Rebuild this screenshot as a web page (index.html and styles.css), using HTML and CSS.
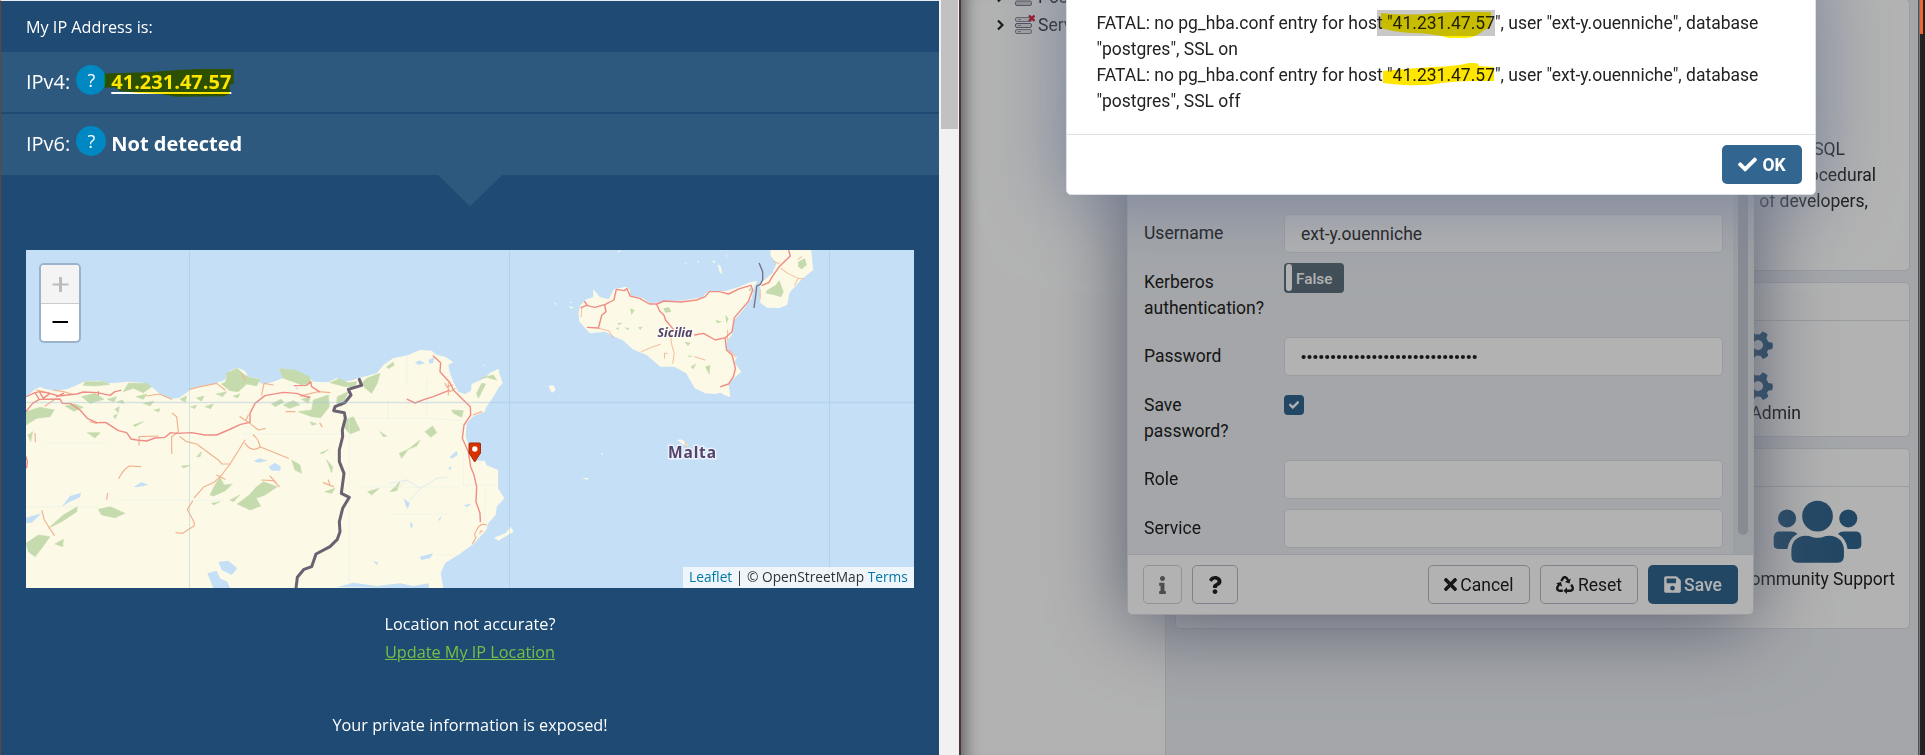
FILE: index.html
```html
<!DOCTYPE html>
<html lang="en">
<head>
<meta charset="utf-8">
<title>My IP Address</title>
<link rel="stylesheet" href="styles.css">
</head>
<body>
<main class="screen">
  <section class="ip-page">
    <header class="ip-title">My IP Address is:</header>
    <div class="ip-row ip-row-first">
      <span>IPv4:</span><span class="help">?</span>
      <a class="ip-value ip-link">41.231.47.57<svg class="marker marker-ip" viewBox="313 207 394 85" width="131" height="28"><path d="M313 221L440 217L525 211L600 207H705V252L693 254V283L676 290L530 291L485 283L420 280L360 274L345 263L313 264Z" fill="#ffe600"/></svg></a>
    </div>
    <div class="ip-row ip-row-last">
      <span>IPv6:</span><span class="help">?</span><strong class="ip-value">Not detected</strong>
    </div>
    <svg class="pointer" viewBox="0 0 64 32" width="64" height="32"><path d="M0 0H64L32 31.5Z" fill="#2d597f"/></svg>

    <div class="map">
      <svg class="map-art" viewBox="26 250 888 338" width="888" height="338">
        <rect x="26" y="250" width="888" height="338" fill="#c5dff6"/>
        <!-- North Africa -->
        <g transform="translate(0 240) scale(.33333)" stroke-linejoin="round" stroke-linecap="round">
          <path fill="#fcfae6" d="M78 470L105 448L120 441L135 447L165 452L200 448L225 438L255 424L300 422L325 430L350 428L385 425L430 428L460 445L480 462L510 476L535 475L555 462L575 445L600 438L640 432L675 420L680 405L690 392L712 383L735 393L745 410L775 415L780 430L795 432L820 425L850 414L845 400L835 386L870 390L900 400L925 410L940 425L985 427L1010 414L1030 424L1050 422L1075 415L1100 408L1130 400L1150 375L1180 355L1225 345L1260 330L1295 332L1310 345L1335 350L1360 366L1345 375L1350 400L1360 425L1375 455L1395 462L1413 452L1415 432L1454 415L1470 398L1496 386L1498 400L1508 430L1495 445L1480 470L1460 500L1454 515L1418 530L1400 550L1397 590L1410 625L1423 662L1454 662L1460 676L1494 690L1494 745L1513 775L1490 800L1487 825L1465 850L1459 870L1423 910L1382 940L1335 970L1322 1000L1330 1045H78Z"/>
          <g fill="#c5dbae" stroke="#c5dbae" stroke-width="2" stroke-dasharray="5 3">
            <path d="M678 425L680 400L712 385L730 402L748 412L780 418L770 438L740 432L715 455L690 452L664 432ZM838 386L885 390L928 410L934 430L905 435L880 425L850 415ZM1018 416L1045 428L1070 425L1065 440L1035 440L990 428ZM1100 415L1140 400L1132 430L1115 460L1096 445L1085 430ZM1012 470L1045 455L1025 500L1010 490ZM940 480L985 465L988 500L962 533L935 530L895 515L935 510ZM385 430L440 430L455 440L430 458L400 445L370 455ZM255 425L310 425L330 433L285 438L250 436ZM1160 380L1180 366L1182 376L1165 386Z"/>
            <path d="M245 470L285 460L312 478L270 490ZM78 515L120 502L163 510L150 530L110 535L78 555ZM262 578L300 578L285 594ZM630 765L645 735L660 712L672 735L697 732L675 753L640 768ZM712 792L748 765L768 742L790 725L832 740L795 765L768 775L782 798L750 810ZM295 808L330 800L375 820L345 833L305 825ZM145 865L190 825L232 800L230 815L185 845ZM78 910L115 885L150 890L125 925L105 950L85 935ZM165 912L190 898L188 920ZM1035 540L1060 530L1080 570L1050 582L1035 565ZM1275 575L1298 558L1310 578L1292 592ZM1198 640L1225 628L1205 655ZM1225 628L1260 600L1250 618ZM1103 755L1138 745L1115 765ZM1170 755L1200 725L1190 752ZM1355 510L1390 512L1385 532L1360 520ZM1430 460L1445 430L1457 432L1435 475ZM1440 415L1480 405L1490 420L1460 412ZM875 660L900 675L905 700L885 690ZM960 640L985 628L970 640ZM980 660L998 680L995 698ZM545 678L570 676L550 684ZM975 755L1005 745L995 760ZM1140 575L1160 588L1150 590ZM400 555L430 545L405 560ZM590 650L605 635L600 650ZM635 790L660 785L640 795ZM690 780L720 765L700 785Z"/>
            <path d="M195 498L225 492L250 502L222 514ZM322 478L350 470L342 486ZM350 486L368 480L372 490ZM345 508L358 500L355 518ZM408 470L440 462L430 478ZM430 490L462 484L450 498ZM540 478L560 468L556 486ZM590 474L612 468L604 484ZM615 500L640 492L632 506ZM650 462L680 455L668 470ZM815 492L842 478L852 486L826 500ZM850 495L880 482L900 494L868 505ZM905 478L930 470L925 490ZM700 468L720 462L712 474ZM462 510L480 506L476 516ZM84 585L98 575L92 605ZM930 545L950 552L936 556ZM340 528L352 522L346 536ZM572 500L590 496L584 506Z"/>
          </g>
          <g fill="#c5dff6">
            <path d="M185 800L210 768L243 758L240 772L210 785ZM78 833L125 820L95 848L78 850ZM402 740L425 726L445 735L410 742ZM806 680L825 668L843 680L840 692L815 692ZM760 662L780 655L803 662L775 668ZM655 965L685 962L712 985L695 1005L665 990ZM622 1000L650 992L660 1015L682 1025L690 1045H640ZM1350 650L1370 632L1373 645L1355 656ZM1245 367L1260 361L1275 370L1255 375ZM1285 360L1303 352L1300 368L1288 371ZM1392 795L1415 792L1400 802ZM1260 950L1300 940L1290 955L1263 960ZM1120 962L1135 968L1130 976ZM1210 775L1230 790L1222 808ZM1230 845L1240 855L1232 866ZM1315 840L1325 825L1320 842ZM1010 1042L1060 1028L1130 1038L1200 1030L1240 1038L1285 1030L1288 1045ZM1345 684L1354 678L1350 692ZM895 445L885 440L892 450Z"/>
          </g>
          <path fill="none" stroke="#c5dff6" stroke-width="2" opacity=".8" d="M1170 730L1220 720L1262 745L1310 715L1340 712M1262 745L1215 795M1220 720L1200 740"/>
          <path fill="none" stroke="#e3ece9" stroke-width="2" opacity=".75" d="M135 609H320M355 781H670M78 800H290M730 582H1020M1075 535H1280L1385 541M1048 525V1045M1075 741H1380M1220 345V430M1280 420V520M1163 480V535M1390 640V735H1495M1455 740V840M1310 945H1380M1170 815L1180 822H1340"/>
          <path fill="none" stroke="#f1b28f" stroke-width="3.5" d="M135 498L165 478M517 520L530 530L535 575L515 590V640M440 468L478 462L515 478M570 448L600 440L650 430L675 450M725 400L735 420M785 465L792 430L820 435M930 470L900 468L955 455L990 458M858 515L885 515M540 590L560 605L590 612L655 660L665 672L690 672L735 600M690 672L665 705L645 725L610 742L583 773M650 705L675 718M578 783L562 808L583 848L582 858L548 880L528 878M735 610Q755 638 780 622Q778 600 760 585M780 620L865 655M785 720L820 722L838 740M810 708L830 730M970 728L1000 740M985 720L990 735M357 715Q368 690 388 678L422 680M126 812L133 840L163 886M105 580L106 605M320 778L323 760M417 615V590L475 588M720 530L750 550L775 570L795 566M738 540L745 525M960 550L966 560M1335 430L1350 455L1365 445M1340 440L1358 435M1345 430V465M1460 855Q1440 848 1430 870Q1420 885 1428 893L1418 910M1440 880Q1440 870 1448 873M1420 525L1445 515M270 545L290 550M160 450L190 455L215 462M110 450L150 460"/>
          <path fill="none" stroke="#f08c86" stroke-width="4.2" d="M78 470L105 458L120 455L150 460L175 468L230 462L250 456L293 458L330 466L345 455L362 451M105 458L118 478L180 477L187 490L212 491L240 510L262 535L290 548L317 547L355 572L380 578L393 597L410 600L440 603L465 594L495 592L512 578L530 580L575 578L615 585L650 585L685 570L722 553L750 547L750 520L765 490L795 467L850 457L890 460L928 473M883 437L920 436L932 425L935 440L958 455M118 478L98 490L78 515M118 455L130 475L150 460M170 470L190 460M295 455V465M78 650L82 665L80 683M1300 348L1322 368L1320 395L1350 428L1360 450L1390 480L1411 500L1412 525L1392 555L1387 595L1405 635L1412 680L1422 705L1430 740L1428 785L1440 820L1441 845M1222 478L1245 489L1280 476L1300 470L1345 452"/>
          <path fill="none" stroke="#6c6073" stroke-width="9" d="M1078 418L1085 436L1045 448L1053 465L1035 488L1005 500L1001 512L1033 518L1036 535L1027 570L1028 590L1018 630L1018 665L1032 700L1030 715L1024 760L1048 772L1028 805L1018 845L1020 875L1012 898L990 920L948 942L935 980L912 988L892 1012L888 1045"/>
        </g>
        <!-- Sicily, Calabria and small islands -->
        <g transform="translate(440 240) scale(.34436 .33333)" stroke-linejoin="round" stroke-linecap="round">
          <g fill="#fcfae6">
            <path d="M408 195L425 178L445 172L445 148L465 172L490 178L505 148L540 140L552 150L552 165L590 175L610 190L630 188L650 183L700 182L760 172L780 153L830 153L865 142L905 125L922 124L912 140L905 175L880 210L855 240L848 285L835 300L830 328L850 340L862 350L856 368L875 395L858 410L838 432L843 472L825 465L815 458L800 462L770 460L740 445L715 400L680 380L640 380L600 345L560 328L530 300L510 292L480 275L435 280L405 245L402 220Z"/>
            <path d="M960 30H1078L1084 90L1050 118L1015 158L1008 195L985 204L950 203L930 188L930 130L965 100L978 70L960 48Z"/>
            <path d="M315 438L330 436L336 450L325 459ZM688 600L700 598L712 606L722 620L705 612ZM157 893L190 880L205 860L214 875L192 888L170 902ZM412 714L430 714L430 720ZM806 72L815 78L820 104L812 95ZM788 62L800 64L798 70ZM712 68H716V71H712ZM748 62H752V67H748ZM332 188L337 190L336 198ZM372 200L386 200L384 206ZM378 185H382V189H378ZM126 374H130V377H126ZM468 640H472V644H468ZM832 46H835V50H832ZM517 32H524V36H517Z"/>
          </g>
          <g fill="#c5dbae">
            <path d="M1040 65L1060 55L1065 75L1050 88L1040 80ZM950 150L975 135L985 120L998 155L990 172L970 165L945 160ZM552 205L565 210L556 225ZM648 205L665 202L672 215L655 218ZM510 265L520 262L518 270ZM535 262L550 265L545 270ZM575 262L588 260L582 270ZM515 250L530 248L520 256ZM710 305L728 308L720 318ZM720 347H732V350H720ZM728 380L745 370L735 388ZM770 380L785 375L782 405ZM828 225L838 235L832 252ZM800 240L820 245L805 250ZM895 150L905 140L903 155Z"/>
          </g>
          <path fill="none" stroke="#f1b28f" stroke-width="3" opacity=".8" d="M460 265L490 272L502 292M585 335L615 322L640 313M670 280L672 310L680 340L676 370M652 355V340H660M740 350L770 360M410 230L412 200M990 85L1010 100L1040 115L1056 117M1040 115L1030 135M968 65L985 70M1040 58L1050 50M930 150V175M835 270V300M840 330L858 350M712 606L718 625"/>
          <path fill="none" stroke="#f08c86" stroke-width="4.2" d="M410 203L425 196L450 202L480 193L505 180L512 148L535 152L543 146L552 168L580 175L608 192L630 192L650 183L700 186L745 180L770 170L782 155L812 155L838 162L870 146L903 136L908 150L895 185L855 233L848 275L828 293L800 300L765 280L740 285M420 185L428 196M428 262L460 264L470 225L482 215L478 195M630 195L638 213L650 225L655 240L678 268M828 293L832 330L848 345L858 385L852 410L838 432L815 440M1013 32L1017 48L985 80L965 110L955 128L935 136"/>
          <path fill="none" stroke="#6c6073" stroke-width="4" opacity=".85" d="M927 70L937 95V120L930 133L920 138L917 165L912 202"/>
        </g>
        <g stroke="#9fc0d9" opacity=".4"><path d="M189.5 250V588M509.5 250V588M829.5 250V588"/><path d="M26 402.500H914" stroke-width="1.500"/></g>
        <!-- Position pin -->
        <path d="M470 443Q469 443 469 444V453L474.700 462L480.500 453V444Q480.500 443 479.500 443Z" fill="#d63300" stroke="#a02c10" stroke-width="1"/><circle cx="474.800" cy="449" r="2.700" fill="#fff"/>
        <text class="label-region" x="657.500" y="336.500" textLength="35" lengthAdjust="spacingAndGlyphs">Sicilia</text>
        <text class="label-country" x="668" y="458" textLength="48">Malta</text>
      </svg>
      <div class="zoom-control"><span class="zoom-in"><svg width="17" height="17"><path d="M8.500 1V16" stroke="#bbb" stroke-width="3"/><path d="M.5 8.500H16.500" stroke="#bbb" stroke-width="2"/></svg></span><span class="zoom-out"><svg width="17" height="17"><path d="M.5 8H16" stroke="#000" stroke-width="2"/></svg></span></div>
      <div class="attribution"><a>Leaflet</a> | © OpenStreetMap <a>Terms</a></div>
    </div>
    <p class="accuracy">Location not accurate?<br><a>Update My IP Location</a></p>
    <p class="exposed">Your private information is exposed!</p>
  </section>
  <div class="scrollbar"><div class="scroll-thumb"></div></div>
  <div class="window-edge"></div>

  <section class="admin">
    <aside class="tree">
      <div class="tree-row"><svg width="7" height="12" viewBox="0 0 7 12"><path class="chevron" d="M1 1.500L5.500 6L1 10.500"/></svg><svg class="server" width="20" height="20" viewBox="0 0 20 20"><g fill="#d0d0d5" stroke="#77747f"><rect x=".5" y="2.500" width="16" height="4.500" rx="1.500"/><rect x=".5" y="8" width="16" height="4.500" rx="1.500"/><rect x=".5" y="14" width="16" height="4.500" rx="1.500"/></g></svg><span>Pos</span></div>
      <div class="tree-row"><svg width="7" height="12" viewBox="0 0 7 12"><path class="chevron" d="M1 1.500L5.500 6L1 10.500"/></svg><svg class="server" width="20" height="20" viewBox="0 0 20 20"><g fill="#e8e8ec" stroke="#8b8892"><rect x=".5" y="2.500" width="16" height="4" rx="1.500"/><rect x=".5" y="8.500" width="16" height="4" rx="1.500" stroke="#6c6385"/><rect x=".5" y="14.500" width="16" height="4" rx="1.500"/></g><path d="M3 4.500H6M3 10.500H6M3 16.500H6" stroke="#999"/><path d="M14 .5L19.500 6M19.500 .5L14 6" stroke="#d4122d" stroke-width="2.400"/></svg><span>Serv</span></div>
    </aside>
    <div class="dashboard">
      <article class="card card-about"><p class="line-a">SQL</p><p class="line-b">procedural</p><p class="line-c">of developers,</p></article>
      <article class="card card-links"><div class="card-head"></div>
        <div class="quick">
          <svg class="gear" viewBox="-15 -15 30 30" width="30" height="30"><use href="#gear"/></svg>
          <svg class="gear" viewBox="-15 -15 30 30" width="30" height="30"><use href="#gear"/></svg>
          <span class="quick-label">pgAdmin</span>
        </div>
      </article>
      <article class="card card-community"><div class="card-head"></div>
        <div class="community">
          <svg viewBox="1113 178 266 188" width="89" height="63" preserveAspectRatio="none" fill="#326690"><circle cx="1155" cy="233" r="27"/><circle cx="1246" cy="226" r="46"/><circle cx="1338" cy="233" r="27"/><path d="M1130 272H1168Q1178 272 1186 279Q1160 295 1156 324H1128Q1115 324 1115 311V294Q1115 272 1130 272ZM1362 272H1325Q1315 272 1307 279Q1332 295 1336 324H1364Q1377 324 1377 311V294Q1377 272 1362 272ZM1208 285Q1222 285 1232 289Q1246 293 1260 289Q1270 285 1284 285Q1325 290 1325 330V345Q1325 365 1306 365H1187Q1168 365 1168 345V330Q1168 290 1208 285Z"/></svg>
          <span>Community Support</span>
        </div>
      </article>
    </div>
    <div class="desktop-edge"><i></i></div>
  </section>

  <svg class="defs" width="0" height="0"><defs><g id="gear" fill="#326690"><path fill-rule="evenodd" d="M-3-14Q0-15 3-14L3.800-10Q6-9 7.500-7.700L11.300-9.200Q13.700-6.800 14.300-3.600L11.200-1V1.500L14.300 4Q13.700 7 11.300 9.500L7.500 8Q6 9.200 3.800 10L3 14Q0 15 -3 14L-3.800 10Q-6 9.200-7.500 8L-11.300 9.500Q-13.700 7-14.300 4L-11.200 1.500V-1L-14.300-3.600Q-13.700-6.800-11.300-9.200L-7.500-7.700Q-6-9-3.800-10ZM5 0A5 5 0 1 0-5 0A5 5 0 1 0 5 0Z" transform="rotate(30)"/></g></defs></svg>

  <!-- Connection dialog -->
  <section class="dialog">
    <div class="dialog-body">
      <div class="form">
        <div class="field"><label>Username</label><div class="input">ext-y.ouenniche</div></div>
        <div class="field field-tall"><label>Kerberos authentication?</label><div class="toggle"><i></i>False</div></div>
        <div class="field"><label>Password</label><div class="input"><svg width="178" height="6"><path d="M2.600 3H176" stroke="#222" stroke-width="4.200" stroke-linecap="round" stroke-dasharray="0 5.900"/></svg></div></div>
        <div class="field field-tall"><label>Save<br>password?</label><div class="checkbox"><svg viewBox="0 0 512 512" width="10" height="10"><path fill="#fff" stroke="#fff" stroke-width="30" d="M173.898 439.404l-166.400-166.400c-9.997-9.997-9.997-26.206 0-36.204l36.203-36.204c9.997-9.998 26.207-9.998 36.204 0L192 312.690 432.095 72.596c9.997-9.997 26.207-9.997 36.204 0l36.203 36.204c9.997 9.997 9.997 26.206 0 36.204l-294.400 294.401c-9.998 9.997-26.207 9.997-36.204-.001z"/></svg></div></div>
        <div class="field"><label>Role</label><div class="input"></div></div>
        <div class="field"><label>Service</label><div class="input"></div></div>
      </div>
      <div class="dialog-scroll"><i></i></div>
    </div>
    <footer class="dialog-foot">
      <span class="btn btn-info"><svg viewBox="0 0 192 512" width="7" height="18"><path fill="#222" d="M20 424.229h20V279.771H20c-11.046 0-20-8.954-20-20V212c0-11.046 8.954-20 20-20h112c11.046 0 20 8.954 20 20v212.229h20c11.046 0 20 8.954 20 20V492c0 11.046-8.954 20-20 20H20c-11.046 0-20-8.954-20-20v-47.771c0-11.046 8.954-20 20-20zM96 0C56.235 0 24 32.235 24 72s32.235 72 72 72 72-32.235 72-72S135.764 0 96 0z"/></svg></span>
      <span class="btn btn-help"><svg viewBox="0 0 384 512" width="14" height="18"><path fill="#222" d="M202.021 0C122.202 0 70.503 32.703 29.914 91.026c-7.363 10.580-5.093 25.086 5.178 32.874l43.138 32.709c10.373 7.865 25.132 6.026 33.253-4.148 25.049-31.381 43.630-49.449 82.757-49.449 30.764 0 68.816 19.799 68.816 49.631 0 22.552-18.617 34.134-48.993 51.164-35.423 19.860-82.299 44.576-82.299 106.405V320c0 13.255 10.745 24 24 24h72.471c13.255 0 24-10.745 24-24v-5.773c0-42.860 125.268-44.645 125.268-160.627C377.504 66.256 286.902 0 202.021 0zM192 373.459c-38.196 0-69.271 31.075-69.271 69.271 0 38.195 31.075 69.270 69.271 69.270s69.271-31.075 69.271-69.271-31.075-69.270-69.271-69.270z"/></svg></span>
      <span class="btn btn-cancel"><svg viewBox="0 0 352 512" width="13" height="19"><path fill="#222" d="M242.720 256l100.070-100.070c12.280-12.280 12.280-32.190 0-44.480l-22.240-22.240c-12.280-12.280-32.190-12.280-44.480 0L176 189.280 75.930 89.210c-12.280-12.280-32.190-12.280-44.480 0L9.210 111.450c-12.280 12.280-12.280 32.190 0 44.480L109.280 256 9.210 356.070c-12.280 12.280-12.280 32.190 0 44.480l22.240 22.240c12.280 12.280 32.200 12.280 44.480 0L176 322.720l100.070 100.070c12.280 12.280 32.200 12.280 44.480 0l22.240-22.240c12.280-12.280 12.280-32.190 0-44.480L242.720 256z"/></svg>Cancel</span>
      <span class="btn btn-reset"><svg viewBox="0 0 18 18" width="18" height="18"><g fill="none" stroke="#222" stroke-width="2.400"><path d="M5.200 5.200L7.200 1.900Q9 .4 10.600 2L12.300 4.800"/><path d="M15.200 8.600L16.600 11.200Q17.400 14.200 14.600 14.700H10.500"/><path d="M6.800 14.700H3.400Q.4 14 1.500 11L3.300 8"/></g><path fill="#222" d="M14.800 2.500L13.500 7.500L8.800 6.100ZM11 11.300V18L7.400 14.700ZM.1 7.200L5 6L6.200 10.800Z"/></svg>Reset</span>
      <span class="btn btn-save"><svg viewBox="0 0 448 512" width="17" height="19"><path fill="#fff" d="M433.941 129.941l-83.882-83.882A48 48 0 0 0 316.118 32H48C21.490 32 0 53.490 0 80v352c0 26.510 21.490 48 48 48h352c26.510 0 48-21.490 48-48V163.882a48 48 0 0 0-14.059-33.941zM224 416c-35.346 0-64-28.654-64-64 0-35.346 28.654-64 64-64s64 28.654 64 64c0 35.346-28.654 64-64 64zm96-304.520V212c0 6.627-5.373 12-12 12H76c-6.627 0-12-5.373-12-12V108c0-6.627 5.373-12 12-12h228.520c3.183 0 6.235 1.264 8.485 3.515l3.480 3.480A11.996 11.996 0 0 1 320 111.480z"/></svg>Save</span>
    </footer>
  </section>
  <div class="backdrop"></div>

  <!-- Error alert -->
  <section class="alert">
    <div class="alert-text">
      <p>FATAL: no pg_hba.conf entry for hos<span class="selected">t "41.231.47.57<svg class="marker marker-one" viewBox="0 0 112 28" width="112" height="28"><path d="M0 2Q30 5 55 2Q80 0 110 1V13Q108 18 103 19Q96 26 85 27H68Q50 22 30 22Q12 21 0 17Z" fill="#fff000"/></svg></span>", user "ext-y.ouenniche", database "postgres", SSL on</p>
      <p>FATAL: no pg_hba.conf entry for host<span class="noted"> "41.231.47.57<svg class="marker marker-two" viewBox="0 0 112 24" width="112" height="24"><path d="M0 8Q20 6 50 4Q75 3 86 0Q96-1 96 3L111 4V18H90Q75 18 58 20Q45 23 20 22Q8 21 0 20Z" fill="#ffe600"/></svg></span>", user "ext-y.ouenniche", database "postgres", SSL off</p>
    </div>
    <footer class="alert-foot"><span class="btn btn-ok"><svg viewBox="0 0 512 512" width="19" height="19"><path fill="#fff" d="M173.898 439.404l-166.400-166.400c-9.997-9.997-9.997-26.206 0-36.204l36.203-36.204c9.997-9.998 26.207-9.998 36.204 0L192 312.690 432.095 72.596c9.997-9.997 26.207-9.997 36.204 0l36.203 36.204c9.997 9.997 9.997 26.206 0 36.204l-294.400 294.401c-9.998 9.997-26.207 9.997-36.204-.001z"/></svg>OK</span></footer>
  </section>
</main>
</body>
</html>
```
FILE: styles.css
```css
* { box-sizing: border-box; }
body { margin: 0; }
p { margin: 0; }
svg { display: block; flex: none; }
.screen { position: relative; display: flex; width: 1925px; height: 755px; overflow: hidden; font-family: Roboto, sans-serif; font-size: 17.5px; line-height: 26px; color: #222; }

/* IP lookup page */
.ip-page { width: 939px; height: 755px; border-left: 1px solid #6b4238; border-top: 1px solid #e8edf2; background: #1f4a73; color: #fff; font-family: "Open Sans", sans-serif; font-size: 16px; }
.ip-title { height: 51px; padding: 13px 25px; font-size: 16.2px; }
.ip-row { display: flex; align-items: center; height: 61px; padding: 0 0 2px 25px; background: #2d597f; font-size: 20px; line-height: 30px; }
.ip-row-first { height: 62px; padding-bottom: 0; border-bottom: 2px solid #1f4a73; }
.help { width: 30px; height: 30px; margin: -5px 5px 0 6px; border-radius: 50%; background: #0088c2; font-size: 18px; text-align: center; line-height: 31px; }
.ip-value { position: relative; font-weight: 700; }
.ip-link { text-decoration: underline; text-decoration-thickness: 2px; text-underline-offset: 3px; }
.marker { position: absolute; mix-blend-mode: multiply; }
.marker-ip { left: -7px; top: 2px; }
.pointer { margin-left: 437px; }
.map { position: relative; width: 888px; height: 338px; margin: 43px 0 0 25px; }
.label-region { font: italic 700 13px "Noto Sans", sans-serif; fill: #56426b; stroke: #fff; stroke-width: 2px; stroke-opacity: .6; paint-order: stroke; }
.label-country { font: 700 15.5px "Noto Sans", sans-serif; fill: #56426b; stroke: #fff; stroke-width: 3px; stroke-opacity: .6; paint-order: stroke; }
.zoom-control { position: absolute; left: 13px; top: 13px; width: 42px; height: 80px; border: 2px solid #9cb2ca; border-radius: 5px; background: #fff; overflow: hidden; }
.zoom-control span { display: grid; place-items: center; height: 37px; padding-left: 1px; }
.zoom-control .zoom-in { height: 39px; background: #f4f4f4; border-bottom: 1px solid #ccc; }
.attribution { position: absolute; right: 0; bottom: 0; width: 231px; height: 21px; padding-left: 6px; background: rgba(255,255,255,.7); color: #333; font-size: 13.75px; line-height: 20px; white-space: nowrap; }
.attribution a { color: #0078a8; }
.accuracy { margin-top: 22px; text-align: center; font-size: 16.25px; line-height: 28px; }
.accuracy a { color: #76c043; text-decoration: underline; }
.exposed { margin-top: 45px; text-align: center; font-size: 16.25px; line-height: 28px; }
.scrollbar { width: 20px; padding-left: 2px; background: #f1f1f1; }
.scroll-thumb { width: 17px; height: 129px; background: #c1c1c1; }
.window-edge { width: 2px; background: #4a3731; }

/* Database administration window */
.admin { display: flex; width: 964px; background: #fff; }
.tree { width: 205px; border-right: 1px solid #dde0e6; box-shadow: inset 18px 0 16px -14px #888; overflow: hidden; padding: 0 0 0 36px; }
.tree-row { display: flex; align-items: center; height: 28px; white-space: nowrap; }
.tree-row:first-child { margin-top: -17px; }
.chevron { fill: none; stroke: #222; stroke-width: 2.2px; }
.server { margin: 0 3px 0 11px; }
.dashboard { display: flex; flex-direction: column; gap: 11px; width: 752px; padding: 0 8px 0 9px; background: #ebeef3; }
.card { border: 1px solid #dde0e6; border-radius: 5px; background: #fff; }
.card-about { height: 272px; padding-top: 136px; margin-top: -1px; text-align: right; flex: none; }
.line-a { padding-right: 64px; } .line-b { padding-right: 33px; } .line-c { padding-right: 41px; }
.card-links { height: 155px; flex: none; }
.card-community { height: 181px; flex: none; }
.card-head { height: 38px; border-bottom: 1px solid #dde0e6; }
.quick { display: flex; flex-direction: column; align-items: flex-end; padding-top: 9px; gap: 11px; }
.gear { margin-right: 136px; }
.quick-label { margin: -12px 108px 0 0; }
.community { display: flex; flex-direction: column; align-items: center; width: 168px; margin: 13px 8px 0 auto; gap: 3px; white-space: nowrap; }
.desktop-edge { width: 7px; border-left: 2px solid #777; background: #222; }
.desktop-edge i { display: block; width: 3px; height: 34px; background: #f06335; }
.defs { position: absolute; }

.dialog { position: absolute; left: 1127px; top: 100px; width: 627px; height: 515px; border: 1px solid #dde0e6; border-radius: 5px; background: #fff; box-shadow: 0 8px 80px #7c849c; overflow: visible; }
.dialog-body { display: flex; height: 454px; border-bottom: 1px solid #dde0e6; background: #ebeef3; }
.form { width: 605px; padding: 113px 10px 0 16px; }
.field { display: flex; align-items: flex-start; height: 49px; }
.field-tall { height: 74px; }
.field label { width: 140px; padding-top: 6px; padding-right: 15px; }
.input { display: flex; align-items: center; width: 439px; height: 39px; padding-left: 16px; border: 1px solid #dde0e6; border-radius: 5px; background: #fff; }
.toggle { display: flex; gap: 4px; width: 60px; height: 30px; padding: 1px 2px; border-radius: 4px; background: #5d6f7c; color: #fff; font-size: 15.3px; font-weight: 500; line-height: 30px; }
.toggle i { width: 6px; height: 27px; border-radius: 3px; background: #fff; }
.checkbox { display: grid; place-items: center; width: 20px; height: 20px; margin-top: 9px; border-radius: 4px; background: #326690; }
.dialog-scroll { width: 20px; padding-left: 5px; background: #e1e5ea; }
.dialog-scroll i { display: block; width: 10px; height: 434px; border-radius: 5px; background: #c3c8d1; }
.dialog-foot { display: flex; align-items: flex-start; padding: 10px 15px; }
.btn { display: flex; align-items: center; justify-content: center; height: 39px; border: 1px solid #b4bac6; border-radius: 5px; gap: 5px; white-space: nowrap; }
.btn-info { width: 39px; opacity: .65; }
.btn-help { width: 46px; margin-left: 10px; }
.btn-cancel { width: 102px; margin-left: 190px; gap: 3px; }
.btn-reset { width: 98px; margin-left: 10px; gap: 4px; }
.btn-save { width: 90px; margin-left: 10px; gap: 3px; border: 0; background: #326690; color: #fff; font-weight: 500; }
.backdrop { position: absolute; left: 961px; top: 0; width: 958px; height: 755px; background: rgba(0,0,0,.3); }

.alert { position: absolute; left: 1066px; top: -50px; width: 750px; height: 245px; border: 1px solid #dde0e6; border-radius: 5px; background: #fff; box-shadow: 0 4px 80px #768098; }
.alert-text { height: 184px; padding: 59px 45px 0 29.5px; border-bottom: 1px solid #dde0e6; }
.selected { position: relative; display: inline-block; background: #c8c8c8; white-space: pre; }
.noted { position: relative; white-space: pre; }
.marker-one { left: 4px; top: 1px; }
.marker-two { left: 0; top: -2px; }
.alert-foot { display: flex; justify-content: flex-end; padding: 10px 13px; }
.btn-ok { width: 80px; border: 0; background: #326690; color: #fff; font-weight: 700; }
```
